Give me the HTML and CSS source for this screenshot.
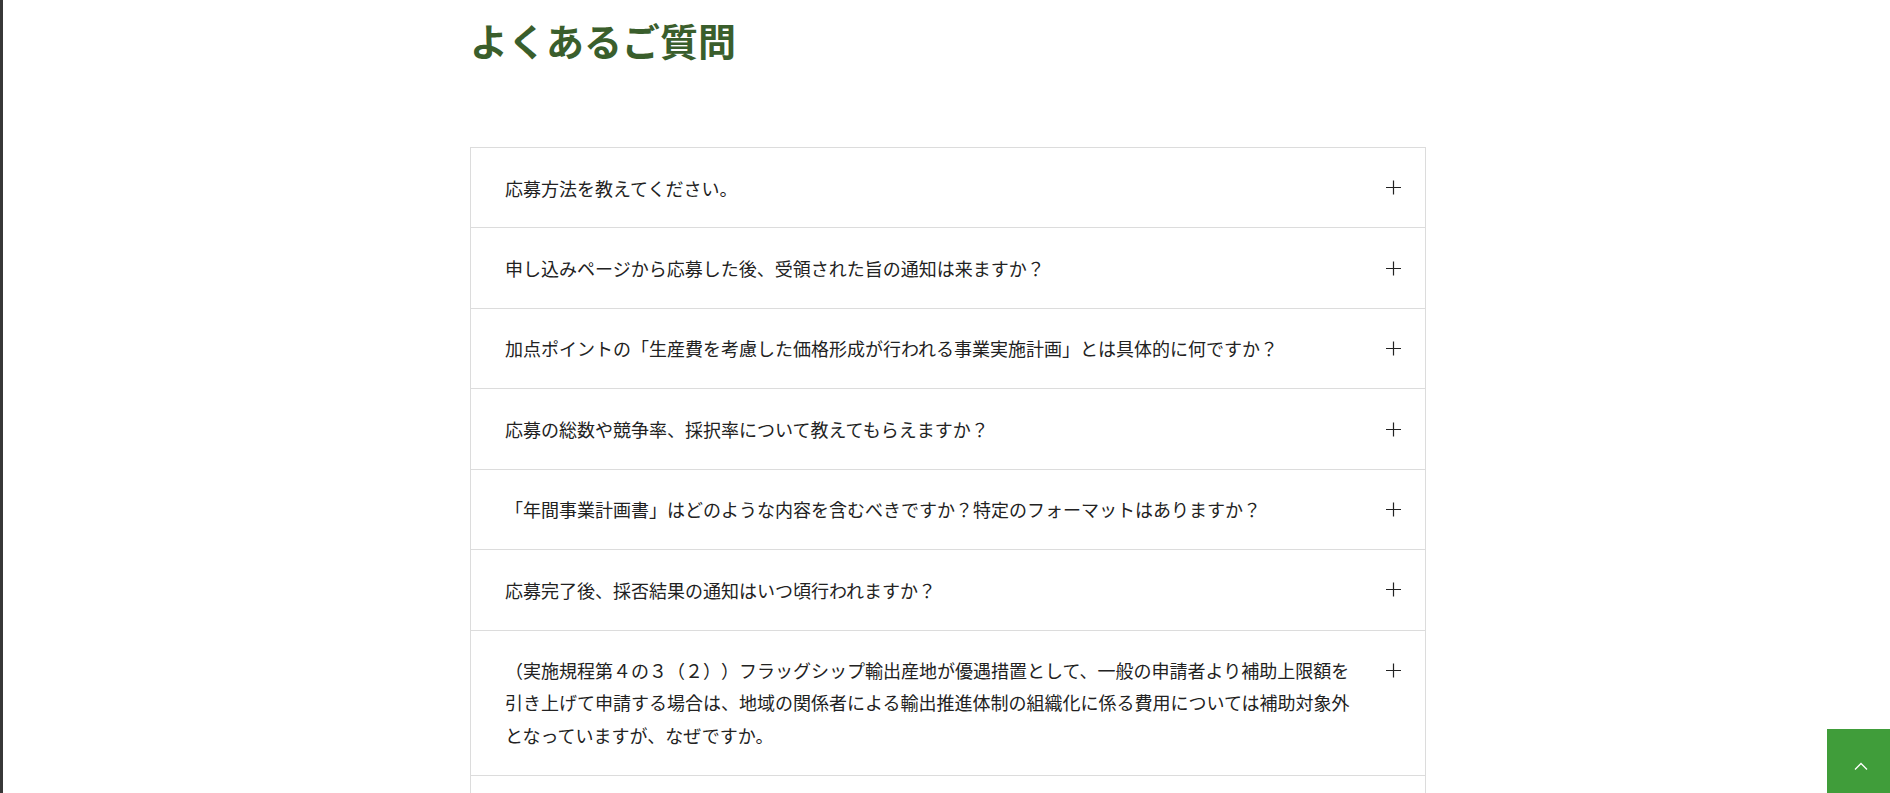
FILE: index.html
```html
<!DOCTYPE html>
<html lang="ja">
  <head>
    <meta charset="utf-8"/>
    <title>よくあるご質問</title>
    <link rel="stylesheet" href="styles.css">
  </head>
  <body>
    <main class="faq">
      <h1 class="faq-title">よくあるご質問</h1>

      <ul class="faq-list">
        <li class="faq-item">
          <div class="faq-question">
            <span class="faq-text">応募方法を教えてください。</span>
            <span class="faq-icon"><svg viewBox="0 0 15 15" width="15" height="15"><path d="M0 7.5H15M7.5 0.5V14.5"/></svg></span>
          </div>
        </li>
        <li class="faq-item">
          <div class="faq-question">
            <span class="faq-text">申し込みページから応募した後、受領された旨の通知は来ますか？</span>
            <span class="faq-icon"><svg viewBox="0 0 15 15" width="15" height="15"><path d="M0 7.5H15M7.5 0.5V14.5"/></svg></span>
          </div>
        </li>
        <li class="faq-item">
          <div class="faq-question">
            <span class="faq-text">加点ポイントの「生産費を考慮した価格形成が行われる事業実施計画」とは具体的に何ですか？</span>
            <span class="faq-icon"><svg viewBox="0 0 15 15" width="15" height="15"><path d="M0 7.5H15M7.5 0.5V14.5"/></svg></span>
          </div>
        </li>
        <li class="faq-item">
          <div class="faq-question">
            <span class="faq-text">応募の総数や競争率、採択率について教えてもらえますか？</span>
            <span class="faq-icon"><svg viewBox="0 0 15 15" width="15" height="15"><path d="M0 7.5H15M7.5 0.5V14.5"/></svg></span>
          </div>
        </li>
        <li class="faq-item">
          <div class="faq-question">
            <span class="faq-text">「年間事業計画書」はどのような内容を含むべきですか？特定のフォーマットはありますか？</span>
            <span class="faq-icon"><svg viewBox="0 0 15 15" width="15" height="15"><path d="M0 7.5H15M7.5 0.5V14.5"/></svg></span>
          </div>
        </li>
        <li class="faq-item">
          <div class="faq-question">
            <span class="faq-text">応募完了後、採否結果の通知はいつ頃行われますか？</span>
            <span class="faq-icon"><svg viewBox="0 0 15 15" width="15" height="15"><path d="M0 7.5H15M7.5 0.5V14.5"/></svg></span>
          </div>
        </li>
        <li class="faq-item">
          <div class="faq-question">
            <span class="faq-text">（実施規程第４の３（２））フラッグシップ輸出産地が優遇措置として、一般の申請者より補助上限額を引き上げて申請する場合は、地域の関係者による輸出推進体制の組織化に係る費用については補助対象外となっていますが、なぜですか。</span>
            <span class="faq-icon"><svg viewBox="0 0 15 15" width="15" height="15"><path d="M0 7.5H15M7.5 0.5V14.5"/></svg></span>
          </div>
        </li>
        <li class="faq-item">
          <div class="faq-question">
            <span class="faq-text">採択後に事業計画の内容を変更することはできますか？</span>
            <span class="faq-icon"><svg viewBox="0 0 15 15" width="15" height="15"><path d="M0 7.5H15M7.5 0.5V14.5"/></svg></span>
          </div>
        </li>
        <li class="faq-item">
          <div class="faq-question">
            <span class="faq-text">問い合わせ先を教えてください。</span>
            <span class="faq-icon"><svg viewBox="0 0 15 15" width="15" height="15"><path d="M0 7.5H15M7.5 0.5V14.5"/></svg></span>
          </div>
        </li>
      </ul>
    </main>

    <a class="pagetop" href="#" aria-label="ページトップへ">
      <svg viewBox="0 0 14 8" width="14" height="8"><path d="M1 7.5L7 1.5L13 7.5"/></svg>
    </a>
  </body>
</html>
```

FILE: styles.css
```css
html {
  border-left: 3px solid #383838;
}

body {
  margin: 0;
  padding-left: 3px;
  font-family: 'Noto Sans CJK JP', sans-serif;
  color: #222;
  background: #fff;
}

.faq {
  width: 956px;
  margin: 0 auto;
  padding: 13px 0 80px;
}

.faq-title {
  margin: 0 0 81px;
  font-size: 38px;
  line-height: 53px;
  font-weight: 700;
  color: #3a5e2c;
}

.faq-list {
  list-style: none;
  margin: 0;
  padding: 0;
  border: 1px solid #dcdcdc;
}

.faq-item + .faq-item {
  border-top: 1px solid #dcdcdc;
}

.faq-question {
  display: flex;
  align-items: flex-start;
  gap: 31px;
  padding: 23.6px 24px 23.6px 34px;
  font-size: 18px;
  line-height: 32.25px;
  text-spacing-trim: space-all;
  cursor: pointer;
}

.faq-text {
  flex: 1;
}

.faq-icon {
  display: flex;
  align-items: center;
  width: 15px;
  height: 32.25px;
}

.faq-icon svg {
  stroke: #222;
  stroke-width: 1.2;
  fill: none;
}

.pagetop {
  position: fixed;
  right: 0;
  bottom: 0;
  width: 63px;
  height: 64px;
  display: flex;
  align-items: center;
  justify-content: center;
  padding: 9px 0 0 4px;
  box-sizing: border-box;
  background: #409d3a;
}

.pagetop svg {
  stroke: #fff;
  stroke-width: 1.3;
  fill: none;
}
```
